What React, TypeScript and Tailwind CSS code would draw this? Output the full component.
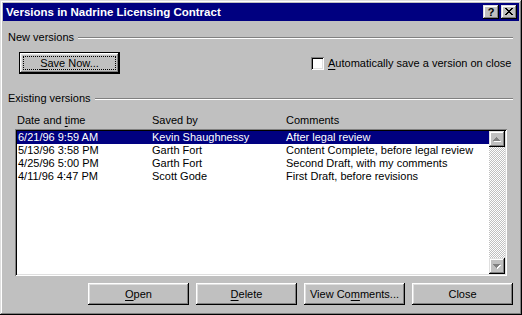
import React from "react";

const font = "font-['Liberation_Sans',Arial,sans-serif]";

function Btn({ children, isDefault = false }: { children: React.ReactNode; isDefault?: boolean }) {
  if (isDefault) {
    return (
      <div className="w-[101px] h-[22px] border border-black bg-[#c0c0c0] shadow-[inset_-1px_-1px_#000,inset_1px_1px_#fff,inset_-2px_-2px_#808080,inset_2px_2px_#dfdfdf] p-[3px] flex">
        <div className="flex-1 border border-dotted border-black flex items-center justify-center text-black">
          {children}
        </div>
      </div>
    );
  }
  return (
    <div className="w-[101px] h-[22px] bg-[#c0c0c0] shadow-[inset_-1px_-1px_#000,inset_1px_1px_#fff,inset_-2px_-2px_#808080,inset_2px_2px_#dfdfdf] flex items-center justify-center text-black">
      {children}
    </div>
  );
}

function Heading({ label }: { label: string }) {
  return (
    <div className="flex items-center h-[13px]">
      <span className="whitespace-nowrap">{label}</span>
      <div className="flex-1 ml-[4px] h-0 border-t border-t-[#808080] border-b border-b-white" />
    </div>
  );
}

function ArrowBtn({ dir }: { dir: "up" | "down" }) {
  const up = "M7 6h1v1H7z M6 7h3v1H6z M5 8h5v1H5z M4 9h7v1H4z";
  const down = "M4 6h7v1H4z M5 7h5v1H5z M6 8h3v1H6z M7 9h1v1H7z";
  const d = dir === "up" ? up : down;
  return (
    <div className="w-[16px] h-[16px] bg-[#c0c0c0] shadow-[inset_-1px_-1px_#000,inset_1px_1px_#dfdfdf,inset_-2px_-2px_#808080,inset_2px_2px_#fff]">
      <svg width="16" height="16" viewBox="0 0 16 16" shapeRendering="crispEdges">
        <path d={d} fill="#fff" transform="translate(1 1)" />
        <path d={d} fill="#808080" />
      </svg>
    </div>
  );
}

const rows = [
  { d: "6/21/96 9:59 AM", s: "Kevin Shaughnessy", c: "After legal review", sel: true },
  { d: "5/13/96 3:58 PM", s: "Garth Fort", c: "Content Complete, before legal review" },
  { d: "4/25/96 5:00 PM", s: "Garth Fort", c: "Second Draft, with my comments" },
  { d: "4/11/96 4:47 PM", s: "Scott Gode", c: "First Draft, before revisions" },
];

export default function App() {
  return (
    <div className={`${font} text-[11px] leading-[13px] text-black w-[522px] h-[315px] bg-[#c0c0c0] p-[3px] shadow-[inset_-1px_-1px_#000,inset_1px_1px_#dfdfdf,inset_-2px_-2px_#808080,inset_2px_2px_#fff] flex flex-col`}>
      {/* Title bar */}
      <div className="h-[18px] bg-[#000080] flex items-center pl-[3px] pr-[2px]">
        <span className="text-white font-bold text-[11.5px] whitespace-nowrap">Versions in Nadrine Licensing Contract</span>
        <div className="ml-auto flex items-center gap-[2px]">
          <div className="w-[16px] h-[14px] bg-[#c0c0c0] shadow-[inset_-1px_-1px_#000,inset_1px_1px_#dfdfdf,inset_-2px_-2px_#808080,inset_2px_2px_#fff] flex items-center justify-center text-black font-bold text-[11px] leading-none pt-[1px]">
            ?
          </div>
          <div className="w-[16px] h-[14px] bg-[#c0c0c0] shadow-[inset_-1px_-1px_#000,inset_1px_1px_#dfdfdf,inset_-2px_-2px_#808080,inset_2px_2px_#fff]">
            <svg width="16" height="14" viewBox="0 0 16 14" shapeRendering="crispEdges">
              <path
                d="M4 3h2v1H4z M10 3h2v1h-2z M5 4h2v1H5z M9 4h2v1H9z M6 5h4v1H6z M7 6h2v1H7z M6 7h4v1H6z M5 8h2v1H5z M9 8h2v1H9z M4 9h2v1H4z M10 9h2v1h-2z"
                fill="#000"
              />
            </svg>
          </div>
        </div>
      </div>

      {/* Content */}
      <div className="flex flex-col pl-[5px] pr-[6px] pt-[10px]">
        <Heading label="New versions" />

        <div className="flex items-center mt-[8px] ml-[11px]">
          <Btn isDefault>
            <span>
              <span className="underline underline-offset-2">S</span>ave Now...
            </span>
          </Btn>
          <div className="ml-[191px] flex items-center">
            <div className="w-[13px] h-[13px] bg-white shadow-[inset_1px_1px_#808080,inset_-1px_-1px_#fff,inset_2px_2px_#000,inset_-2px_-2px_#dfdfdf]" />
            <span className="ml-[4px] whitespace-nowrap">
              <span className="underline underline-offset-2">A</span>utomatically save a version on close
            </span>
          </div>
        </div>

        <div className="mt-[18px]">
          <Heading label="Existing versions" />
        </div>

        <div className="flex mt-[9px] ml-[9px] h-[13px]">
          <div className="w-[135px]">
            Date and <span className="underline underline-offset-2">t</span>ime
          </div>
          <div className="w-[134px]">Saved by</div>
          <div>Comments</div>
        </div>

        <div className="ml-[7px] mt-[2px] w-[492px] h-[147px] p-[2px] bg-white shadow-[inset_1px_1px_#808080,inset_-1px_-1px_#fff,inset_2px_2px_#000,inset_-2px_-2px_#dfdfdf] flex">
          <div className="flex-1 flex flex-col bg-white">
            {rows.map((r) => (
              <div
                key={r.d}
                className={`flex h-[13px] pl-[1px] whitespace-nowrap ${r.sel ? "bg-[#000080] text-white" : "text-black"}`}
              >
                <div className="w-[134px]">{r.d}</div>
                <div className="w-[134px]">{r.s}</div>
                <div>{r.c}</div>
              </div>
            ))}
          </div>
          <div className="w-[16px] flex flex-col">
            <ArrowBtn dir="up" />
            <div className="flex-1 bg-[image:repeating-conic-gradient(#c0c0c0_0%_25%,#ffffff_0%_50%)] bg-[length:2px_2px]" />
            <ArrowBtn dir="down" />
          </div>
        </div>

        <div className="flex justify-end gap-[7px] mt-[7px]">
          <Btn>
            <span>
              <span className="underline underline-offset-2">O</span>pen
            </span>
          </Btn>
          <Btn>
            <span>
              <span className="underline underline-offset-2">D</span>elete
            </span>
          </Btn>
          <Btn>
            <span>
              View Co<span className="underline underline-offset-2">m</span>ments...
            </span>
          </Btn>
          <Btn>Close</Btn>
        </div>
      </div>
    </div>
  );
}
